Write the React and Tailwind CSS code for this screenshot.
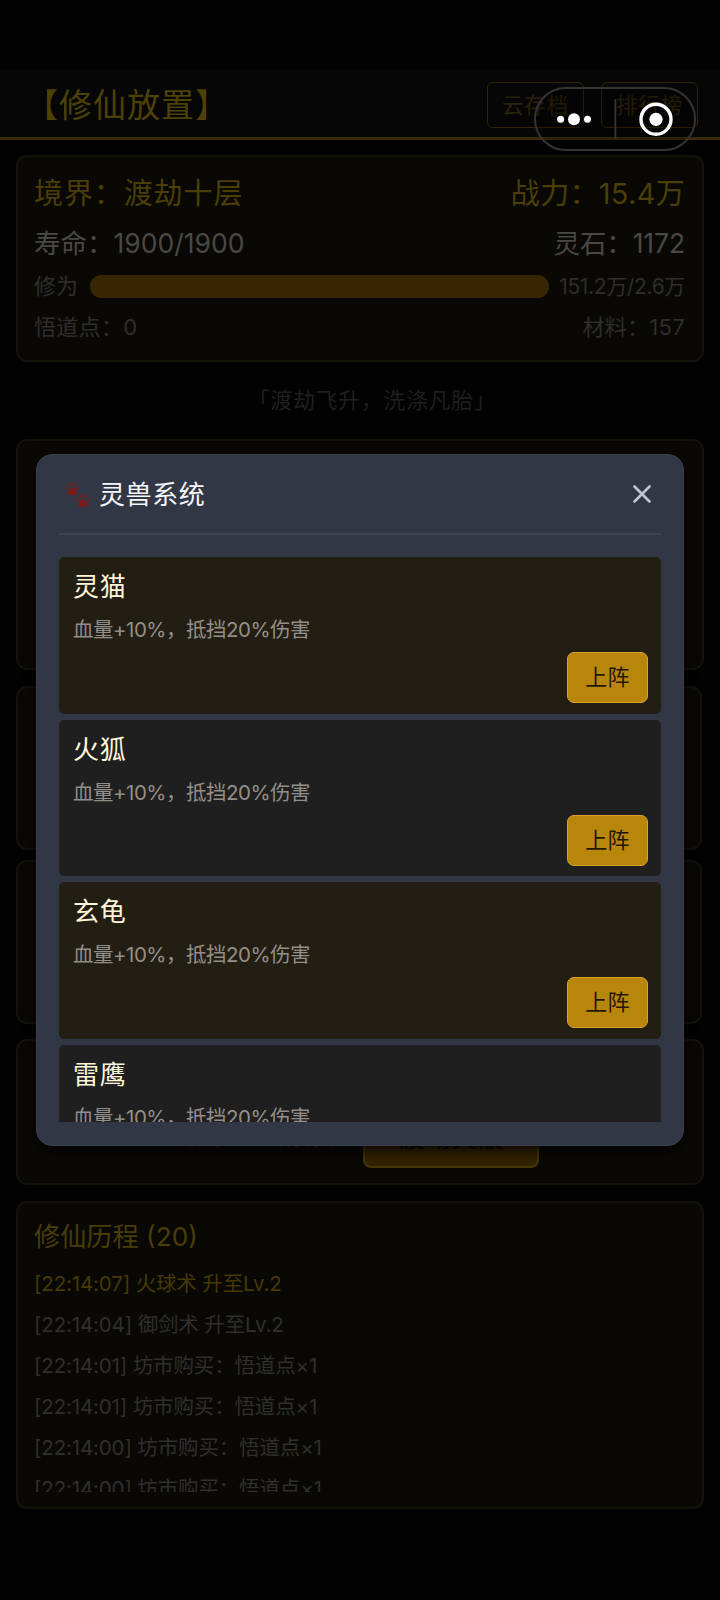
import clsx from 'clsx';

const beasts = [
    { name: '灵猫', desc: '血量+10%，抵挡20%伤害' },
    { name: '火狐', desc: '血量+10%，抵挡20%伤害' },
    { name: '玄龟', desc: '血量+10%，抵挡20%伤害' },
    { name: '雷鹰', desc: '血量+10%，抵挡20%伤害' },
];

const logs = [
    { time: '22:14:07', text: '火球术 升至Lv.2', highlight: true },
    { time: '22:14:04', text: '御剑术 升至Lv.2' },
    { time: '22:14:01', text: '坊市购买：悟道点×1' },
    { time: '22:14:01', text: '坊市购买：悟道点×1' },
    { time: '22:14:00', text: '坊市购买：悟道点×1' },
    { time: '22:14:00', text: '坊市购买：悟道点×1' },
];

function Panel({ className, children }) {
    return (
        <section className={clsx('rounded-[11px] border-2 border-[#15120a] bg-[#090804]', className)}>
            {children}
        </section>
    );
}

function HeaderButton({ children }) {
    return (
        <button className="h-[46px] w-[97px] rounded-md border border-[#302408] text-[21.5px] tracking-[0.8px] text-[#2c2208]">
            {children}
        </button>
    );
}

function PawPrints() {
    return (
        <svg className="h-7 w-7" viewBox="0 0 28 28" fill="#5c282d">
            <g id="paw">
                <ellipse cx="3" cy="8" rx="1.800" ry="2.100" />
                <ellipse cx="6.200" cy="4.200" rx="1.900" ry="2.200" />
                <ellipse cx="10.800" cy="4.200" rx="1.900" ry="2.200" />
                <ellipse cx="14" cy="8" rx="1.800" ry="2.100" />
                <path fill="#7b1a17" d="M8.500 7.500c2.200 0 4.900 3.500 4.900 5.500 0 1.700-1.500 2.200-2.700 1.900-1.400-.4-3-.4-4.400 0-1.200.3-2.700-.2-2.700-1.900 0-2 2.700-5.500 4.900-5.500z" />
            </g>
            <use href="#paw" x="10.500" y="12" />
        </svg>
    );
}

function Capsule() {
    return (
        <div className="absolute left-[534px] top-[87px] z-20 flex h-16 w-[162px] items-center rounded-full border-2 border-[#343434] bg-black/20">
            <svg className="h-full w-full" viewBox="0 0 158 60" fill="#fff">
                <circle cx="24.600" cy="30.300" r="3.500" />
                <circle cx="38" cy="30.300" r="6" />
                <circle cx="51.500" cy="30.300" r="3.500" />
                <rect x="78.500" y="10" width="1.800" height="40" fill="#343434" />
                <circle cx="120" cy="30.300" r="15" fill="none" stroke="#fff" strokeWidth="3.400" />
                <circle cx="120" cy="30.300" r="6.600" />
            </svg>
        </div>
    );
}

function BeastCard({ beast, odd }) {
    return (
        <li
            className={clsx(
                'flex h-[156.5px] shrink-0 flex-col rounded-[5px] pl-[14px] pr-[13px] pt-3',
                odd ? 'bg-[#1f1f1f]' : 'bg-[#231e13]'
            )}
        >
            <h3 className="h-9 text-[26px] leading-9 tracking-[0.7px] text-[#fff5d8]">{beast.name}</h3>
            <p className="mt-[11px] h-7 text-[20.5px] leading-7 tracking-[-0.5px] text-[#938f88]">{beast.desc}</p>
            <button className="mt-2 h-[51px] w-[81px] self-end rounded-[7px] border-[1.5px] border-[#d7a32c] bg-[#b8860b] text-[22px] tracking-[0.3px] text-[#241804]">
                上阵
            </button>
        </li>
    );
}

function BeastModal() {
    return (
        <div className="absolute inset-0 z-10 flex items-center justify-center">
            <div className="flex h-[692px] w-[648px] flex-col rounded-2xl border border-[#3b3f4e] bg-[#323746] px-[22px] shadow-[0_4px_14px_rgba(0,0,0,0.9)]">
                <div className="flex h-20 shrink-0 items-center justify-between border-b-2 border-[#404352] pl-[5px] pr-[10px]">
                    <h2 className="flex items-center gap-[7px] text-[26px] tracking-[0.6px] text-[#f6f7fb]">
                        <PawPrints />
                        灵兽系统
                    </h2>
                    <svg className="h-[18px] w-[18px]" viewBox="0 0 18 18" stroke="#c3c5cc" strokeWidth="2.600" strokeLinecap="round">
                        <path d="M1.500 1.500l15 15M16.500 1.500l-15 15" />
                    </svg>
                </div>
                <ul className="mb-[23px] mt-[22px] flex min-h-0 flex-1 flex-col gap-1.5 overflow-hidden">
                    {beasts.map((beast, i) => (
                        <BeastCard key={beast.name} beast={beast} odd={i % 2 === 1} />
                    ))}
                </ul>
            </div>
        </div>
    );
}

export default function App() {
    return (
        <div className="relative h-[1600px] w-[720px] overflow-hidden bg-[#020202] pt-[70px] font-[Inter,'Noto_Sans_CJK_SC',sans-serif]">
            <header className="flex h-[70px] items-start justify-between border-b-[3px] border-[#3a2b08] bg-[#060606] pl-[25px] pr-[22px] pt-3">
                <h1 className="h-[46px] text-[33px] leading-[46px] tracking-[1px] text-[#4e4106]">【修仙放置】</h1>
                <div className="flex gap-[17px]">
                    <HeaderButton>云存档</HeaderButton>
                    <HeaderButton>排行榜</HeaderButton>
                </div>
            </header>

            <main className="flex flex-col px-4 pt-[15px]">
                <Panel className="flex h-[207px] flex-col pl-4 pr-[17px] pt-[13px]">
                    <div className="flex h-12 items-center justify-between text-[29px] tracking-[0.9px] text-[#4b3e06]">
                        <span>境界：渡劫十层</span>
                        <span className="tracking-[0.3px]">战力：15.4万</span>
                    </div>
                    <div className="mt-0.5 flex h-12 items-center justify-between text-[26.500px] text-[#494845]">
                        <span>寿命：1900/1900</span>
                        <span className="tracking-[-0.1px]">灵石：1172</span>
                    </div>
                    <div className="-mt-px flex h-[38px] items-center text-[22px] text-[#2f2e2b]">
                        <span>修为</span>
                        <div className="ml-[12px] h-[23px] w-[459px] rounded-full bg-[#382603]" />
                        <span className="ml-auto pt-0.5 text-[21px] tracking-[-0.35px]">151.2万/2.6万</span>
                    </div>
                    <div className="mt-[3px] flex h-[38px] items-center justify-between text-[22px] tracking-[0.3px] text-[#2f2e2b]">
                        <span>悟道点：0</span>
                        <span>材料：157</span>
                    </div>
                </Panel>

                <p className="h-[77px] pl-[24px] text-center text-[22px] leading-[77px] tracking-[0.6px] text-[#1f1f1f]">
                    「渡劫飞升，洗涤凡胎」
                </p>

                <Panel className="h-[231px]" />
                <Panel className="mr-0.5 mt-4 h-[164px]" />
                <Panel className="mr-0.5 mt-2.5 h-[164px]" />
                <Panel className="mt-[15px] flex h-[146px] items-end pb-[15px] pl-[163px]">
                    <div className="flex h-[62px] w-[182px] gap-14 text-[21px] leading-[64px] text-[#262523]">
                        <span>渡劫</span>
                        <span>成功率</span>
                    </div>
                    <button className="h-[62px] w-[176px] rounded-lg border-2 border-[#443505] bg-[#332301] text-[26px] text-[#090600]">
                        渡劫突破
                    </button>
                </Panel>

                <Panel className="mt-4 h-[308px] px-4 pt-2.5">
                    <h2 className="h-12 text-[26.200px] leading-[48px] text-[#4a3d06]">修仙历程 (20)</h2>
                    <ul className="mt-0.5 h-[229px] overflow-hidden text-[20.500px] tracking-[-0.15px]">
                        {logs.map((log, i) => (
                            <li
                                key={i}
                                className={clsx('h-[41px] leading-[41px]', log.highlight ? 'text-[#443906]' : 'text-[#302f2c]')}
                            >
                                [{log.time}] {log.text}
                            </li>
                        ))}
                    </ul>
                </Panel>
            </main>

            <Capsule />
            <BeastModal />
        </div>
    );
}
